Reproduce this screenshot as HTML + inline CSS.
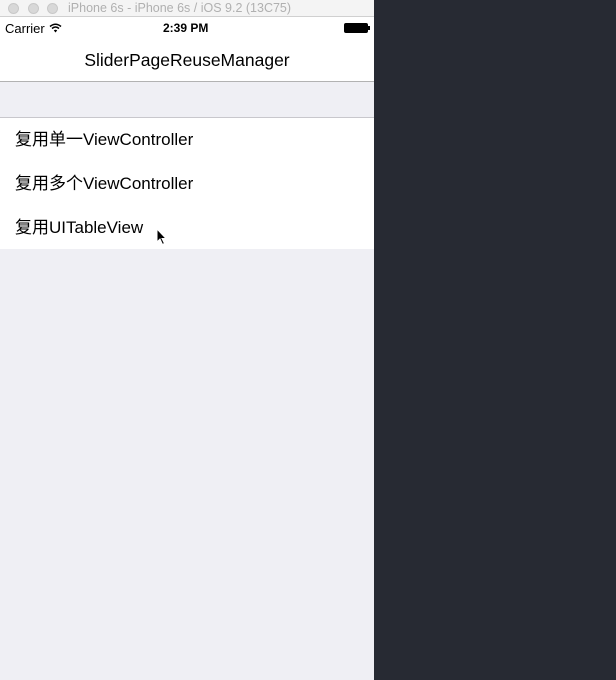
<!DOCTYPE html>
<html><head><meta charset="utf-8"><style>
*{margin:0;padding:0;box-sizing:border-box}
body{width:616px;height:680px;overflow:hidden;background:#272a33;font-family:"Liberation Sans","Noto Sans CJK SC",sans-serif;position:relative}
#sim{position:absolute;left:0;top:0;width:374px;height:680px;background:#efeff4}
#tb{height:17px;background:#f4f4f4;border-bottom:1px solid #d0d0d0;position:relative;font-size:12.5px;color:#b0b0b0}
.dot{position:absolute;top:3px;width:11px;height:11px;border-radius:50%;background:#d8d8d8;border:1px solid #c8c8c8}
#sb{position:absolute;top:17px;left:0;width:374px;height:22px;background:#fff;font-size:12px;color:#000}
#nav{position:absolute;top:39px;left:0;width:374px;height:43px;background:#fff;border-bottom:1px solid #b2b2b2;text-align:center;font-size:17.5px;line-height:42px}
#list{position:absolute;top:117px;left:0;width:374px;height:132px;background:#fff;border-top:1px solid #c8c7cc}
.row{height:44px;line-height:43px;padding-left:15px;font-size:17px;color:#000}
</style></head><body>
<div id="sim">
<div id="tb">
<div class="dot" style="left:8px"></div><div class="dot" style="left:28px"></div><div class="dot" style="left:47px"></div>
<span style="position:absolute;left:68px;top:1px">iPhone 6s - iPhone 6s / iOS 9.2 (13C75)</span>
</div>
<div id="sb">
<span style="position:absolute;left:5px;top:4px;font-size:13px">Carrier</span>
<svg style="position:absolute;left:49px;top:6px" width="13" height="10" viewBox="0 0 13 10"><path d="M1 3.5 Q6.5 -1 12 3.5" stroke="#000" stroke-width="1.5" fill="none"/><path d="M3 5.5 Q6.5 2.5 10 5.5" stroke="#000" stroke-width="1.5" fill="none"/><path d="M4.8 7.4 L6.5 9.5 L8.2 7.4 Q6.5 6 4.8 7.4Z" fill="#000"/></svg>
<span style="position:absolute;left:163px;top:4px;font-weight:bold">2:39 PM</span>
<div style="position:absolute;left:344px;top:6px;width:24px;height:10px;background:#000;border-radius:2px"></div>
<div style="position:absolute;left:368px;top:9px;width:2px;height:4px;background:#000"></div>
</div>
<div id="nav">SliderPageReuseManager</div>
<div id="list">
<div class="row">复用单一ViewController</div>
<div class="row">复用多个ViewController</div>
<div class="row">复用UITableView</div>
</div>
<svg style="position:absolute;left:156px;top:228px" width="12" height="18" viewBox="0 0 12 18"><path d="M1 1 L1 14 L4 11 L6.5 16.5 L8.5 15.5 L6 10.5 L10 10.5 Z" fill="#000" stroke="#fff" stroke-width="1"/></svg>
</div>
</body></html>
